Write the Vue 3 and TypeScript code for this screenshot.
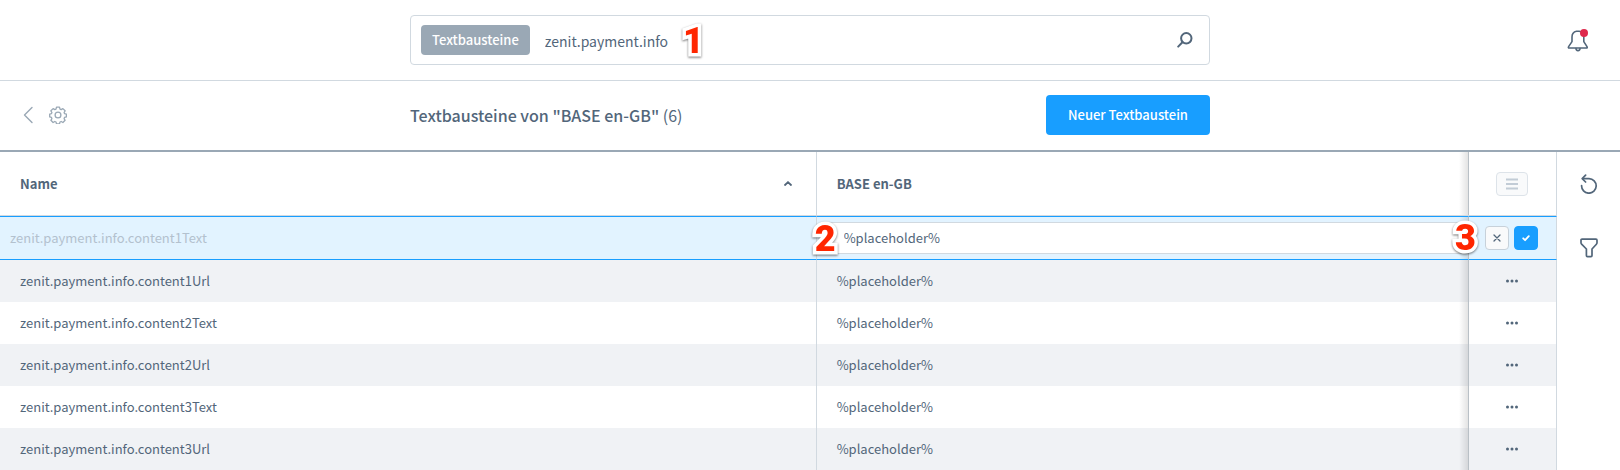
<script setup lang="ts">
import { ref } from 'vue'

interface Snippet {
  name: string
  value: string
}

const search = ref('zenit.payment.info')
const draft = ref('%placeholder%')
const editing = ref(0)

const snippets: Snippet[] = [
  { name: 'zenit.payment.info.content1Text', value: '%placeholder%' },
  { name: 'zenit.payment.info.content1Url', value: '%placeholder%' },
  { name: 'zenit.payment.info.content2Text', value: '%placeholder%' },
  { name: 'zenit.payment.info.content2Url', value: '%placeholder%' },
  { name: 'zenit.payment.info.content3Text', value: '%placeholder%' },
  { name: 'zenit.payment.info.content3Url', value: '%placeholder%' },
]
</script>

<template>
  <div class="page">
    <header class="topbar">
      <form class="search" role="search" @submit.prevent>
        <span class="tag">Textbausteine</span>
        <input v-model="search" class="search-input" type="text" aria-label="Suche" />
        <span class="marker marker-search">1</span>
        <button class="icon-button search-button" type="submit" aria-label="Suchen">
          <svg width="16" height="16" viewBox="0 0 16 16" fill="none" stroke="#52667a" stroke-width="2" stroke-linecap="round">
            <circle cx="9.3" cy="6.3" r="5.2" />
            <path d="M5.4 10.2 1.2 14.6" />
          </svg>
        </button>
      </form>
      <button class="icon-button bell" type="button" aria-label="Benachrichtigungen">
        <svg width="22" height="24" viewBox="0 0 22 24" fill="none" stroke="#52667a" stroke-width="1.6" stroke-linejoin="round" stroke-linecap="round">
          <path d="M9.5 3.2C6.6 3.8 5 6 5 9v4.600L1.600 18.600c-.5.8-.2 1.400.6 1.400h17.200c.8 0 1.100-.6.600-1.400L16.800 13.600V9c0-3-1.700-5.200-4.600-5.800z" />
          <path d="M9 20.600a2 2 0 0 0 4 0" />
          <circle cx="17" cy="5" r="4" fill="#de294c" stroke="none" />
        </svg>
      </button>
    </header>

    <div class="smartbar">
      <div class="nav">
        <a class="icon-link" href="#" aria-label="Zurück">
          <svg width="10" height="18" viewBox="0 0 10 18" fill="none" stroke="#9aa8b5" stroke-width="1.4" stroke-linecap="round" stroke-linejoin="round"><path d="M9 1.400 1.500 9 9 16.600" /></svg>
        </a>
        <button class="icon-button" type="button" aria-label="Einstellungen">
          <svg width="18" height="18" viewBox="0 0 18 18" fill="none" stroke="#9aa8b5" stroke-width="1.300" stroke-linejoin="round">
            <circle cx="9" cy="9" r="2.900" />
            <path d="M7.500 1.200h3l.5 1.900 1.200.5 1.700-1 2.200 2.200-1 1.700.4 1.100 1.900.5v2.800l-1.900.5-.4 1.200 1 1.700-2.200 2.200-1.700-1-1.200.5-.5 1.800h-3L7 16l-1.200-.5-1.700 1-2.200-2.200 1-1.700-.4-1.200L.7 10.900V8.100l1.800-.5.4-1.100-1-1.700 2.200-2.200 1.700 1L7 3.100z" />
          </svg>
        </button>
      </div>
      <div class="smartbar-main">
        <h1 class="title">Textbausteine von "BASE en-GB" <span class="count">(6)</span></h1>
        <button class="primary" type="button">Neuer Textbaustein</button>
      </div>
    </div>

    <div class="content">
      <table class="grid">
        <colgroup>
          <col class="col-name" />
          <col />
          <col class="col-actions" />
        </colgroup>
        <thead>
          <tr>
            <th scope="col">
              <div class="sortable">
                Name
                <svg width="8" height="5" viewBox="0 0 8 5" fill="none" stroke="#52667a" stroke-width="1.800" stroke-linecap="round"><path d="M1 4 4 1.200 7 4" /></svg>
              </div>
            </th>
            <th scope="col">BASE en-GB</th>
            <th class="actions" scope="col">
              <button class="columns" type="button" aria-label="Spalten">
                <svg width="12" height="12" viewBox="0 0 12 12" stroke="#c2ccd6" stroke-width="2"><path d="M0 1.500h12M0 6h12M0 10.500h12" /></svg>
              </button>
            </th>
          </tr>
        </thead>
        <tbody>
          <tr v-for="(snippet, index) in snippets" :key="snippet.name" :class="{ editing: index === editing }">
            <td>{{ snippet.name }}</td>
            <td v-if="index === editing" class="edit-cell">
              <input v-model="draft" class="inline-input" type="text" aria-label="BASE en-GB" />
              <span class="marker marker-value">2</span>
            </td>
            <td v-else>{{ snippet.value }}</td>
            <td class="actions">
              <div v-if="index === editing" class="inline-actions">
                <button class="square cancel" type="button" aria-label="Abbrechen">
                  <svg width="8" height="8" viewBox="0 0 8 8" stroke="#52667a" stroke-width="1.300" stroke-linecap="round"><path d="m1 1 6 6M7 1 1 7" /></svg>
                </button>
                <button class="square save" type="button" aria-label="Speichern">
                  <svg width="8" height="8" viewBox="0 0 8 8" fill="none" stroke="#fff" stroke-width="1.800" stroke-linecap="round" stroke-linejoin="round"><path d="m1.200 4.300 1.900 1.900 3.700-4" /></svg>
                </button>
                <span class="marker marker-save">3</span>
              </div>
              <button v-else class="icon-button more" type="button" aria-label="Aktionen">
                <svg width="12" height="4" viewBox="0 0 12 4" fill="#52667a"><circle cx="1.500" cy="2" r="1.500" /><circle cx="6" cy="2" r="1.500" /><circle cx="10.500" cy="2" r="1.500" /></svg>
              </button>
            </td>
          </tr>
        </tbody>
      </table>
      <aside class="sidebar">
        <button class="icon-button" type="button" aria-label="Aktualisieren">
          <svg width="18" height="20" viewBox="0 0 18 20" fill="none" stroke="#52667a" stroke-width="1.700" stroke-linecap="round" stroke-linejoin="round">
            <path d="M1.600 11.600a7.300 7.300 0 1 0 7.400-7H3" />
            <path d="M5.600 1.200 2.200 4.600 5.600 8" />
          </svg>
        </button>
        <button class="icon-button" type="button" aria-label="Filter">
          <svg width="18" height="20" viewBox="0 0 18 20" fill="none" stroke="#52667a" stroke-width="1.700" stroke-linejoin="round">
            <path d="M2 1.200h14c.6 0 1 .4 1 1v2.600c0 .6-.2 1-.6 1.400L12 11v6.600c0 .6-.4 1-1 1H7.400c-.6 0-1-.4-1-1V11L1.600 6.200C1.200 5.800 1 5.400 1 4.800V2.200c0-.6.4-1 1-1z" />
          </svg>
        </button>
      </aside>
    </div>
  </div>
</template>

<style>
body {
  margin: 0;
}
</style>

<style scoped>
.page {
  background: #fff;
  color: #52667a;
  font-family: "Noto Sans CJK SC", "Noto Sans", sans-serif;
  font-size: 13px;
  line-height: 20px;
}

.page * {
  box-sizing: border-box;
}

button,
input {
  font: inherit;
  color: inherit;
  margin: 0;
  padding: 0;
}

svg {
  display: block;
}

.icon-button {
  display: flex;
  align-items: center;
  justify-content: center;
  border: 0;
  background: none;
  cursor: pointer;
}

.topbar,
.smartbar {
  display: grid;
  grid-template-columns: 1fr minmax(0, 800px) 1fr;
  align-items: center;
}

.topbar {
  height: 81px;
  border-bottom: 1px solid #d1d9e0;
}

.search {
  grid-column: 2;
  position: relative;
  display: flex;
  align-items: center;
  height: 50px;
  padding: 0 16px 0 10px;
  border: 1px solid #d1d9e0;
  border-radius: 4px;
}

.tag {
  padding: 5px 11px;
  border-radius: 4px;
  background: #9aa8b5;
  color: #fff;
  font-weight: 500;
}

.search-input {
  flex: 1;
  min-width: 0;
  height: 40px;
  padding: 2px 15px 0;
  border: 0;
  outline: 0;
  background: none;
  font-size: 14px;
}

.bell {
  justify-self: end;
  margin-right: 31px;
}

.smartbar {
  height: 71px;
  padding-bottom: 1px;
  border-bottom: 2px solid #9aa8b5;
}

.nav {
  display: flex;
  align-items: center;
  gap: 16px;
  padding-left: 23px;
}

.smartbar-main {
  display: flex;
  align-items: center;
  justify-content: space-between;
}

.title {
  margin: 0;
  font-size: 16px;
  line-height: 24px;
  font-weight: 500;
}

.count {
  font-weight: 400;
}

.primary {
  height: 40px;
  padding: 0 22px;
  border: 0;
  border-radius: 4px;
  background: #189eff;
  color: #fff;
  font-weight: 500;
  cursor: pointer;
}

.content {
  display: flex;
}

.grid {
  flex: 1;
  min-width: 0;
  table-layout: fixed;
  border-collapse: separate;
  border-spacing: 0;
}

.col-name {
  width: 52.45%;
}

.col-actions {
  width: 89px;
}

th,
td {
  padding: 0 20px;
  border-right: 1px solid #d1d9e0;
  text-align: left;
}

th {
  height: 64px;
  border-bottom: 1px solid #d1d9e0;
  font-weight: 700;
}

td {
  height: 42px;
}

tbody tr:nth-child(even) {
  background: #f0f2f5;
}

.sortable {
  display: flex;
  align-items: center;
  justify-content: space-between;
  padding-right: 4px;
}

.actions {
  position: relative;
  padding: 0 1px 0 0;
  border-left: 1px solid #d1d9e0;
}

th:nth-child(2),
td:nth-child(2) {
  border-right: 0;
}

.actions::before {
  content: "";
  position: absolute;
  top: 0;
  bottom: 0;
  right: 100%;
  width: 10px;
  background: linear-gradient(to left, rgba(0, 0, 0, 0.12), transparent);
}

.columns {
  display: flex;
  align-items: center;
  justify-content: center;
  width: 32px;
  height: 24px;
  margin: 0 auto;
  border: 1px solid #dde3e9;
  border-radius: 4px;
  background: #f9fafb;
}

.editing td {
  height: 44px;
  border-top: 1px solid #189eff;
  border-bottom: 1px solid #189eff;
  background: #e2f3ff;
}

.editing td:first-child {
  padding-left: 10px;
  color: #b3c1ce;
}

.editing .edit-cell {
  position: relative;
  padding: 0 0 0 10px;
}

.inline-input {
  display: block;
  width: 100%;
  height: 32px;
  padding: 0 16px 2px;
  border: 1px solid #d1d9e0;
  border-right: 0;
  border-radius: 4px 0 0 4px;
  outline: 0;
  background: #fff;
}

.inline-actions {
  display: flex;
  padding-left: 16px;
  gap: 5px;
}

.square {
  display: flex;
  align-items: center;
  justify-content: center;
  width: 24px;
  height: 24px;
  border: 1px solid #c7d1da;
  border-radius: 4px;
  background: #f9fafb;
}

.save {
  border-color: #189eff;
  background: #189eff;
}

.more {
  width: 100%;
  height: 24px;
}

.sidebar {
  display: flex;
  flex-direction: column;
  align-items: center;
  gap: 44px;
  width: 63px;
  padding-top: 22px;
}

.marker {
  position: absolute;
  z-index: 1;
  color: #ff2600;
  font-family: Roboto, "Liberation Sans", sans-serif;
  font-size: 36px;
  line-height: 36px;
  font-weight: 900;
  -webkit-text-stroke: 7px #fff;
  paint-order: stroke fill;
  filter: drop-shadow(0 1px 1px rgba(0, 0, 0, 0.55));
}

.marker-search {
  top: 7px;
  left: 272px;
}

.marker-value {
  top: 4px;
  left: -2px;
}

.marker-save {
  top: 3px;
  left: -14px;
}
</style>
